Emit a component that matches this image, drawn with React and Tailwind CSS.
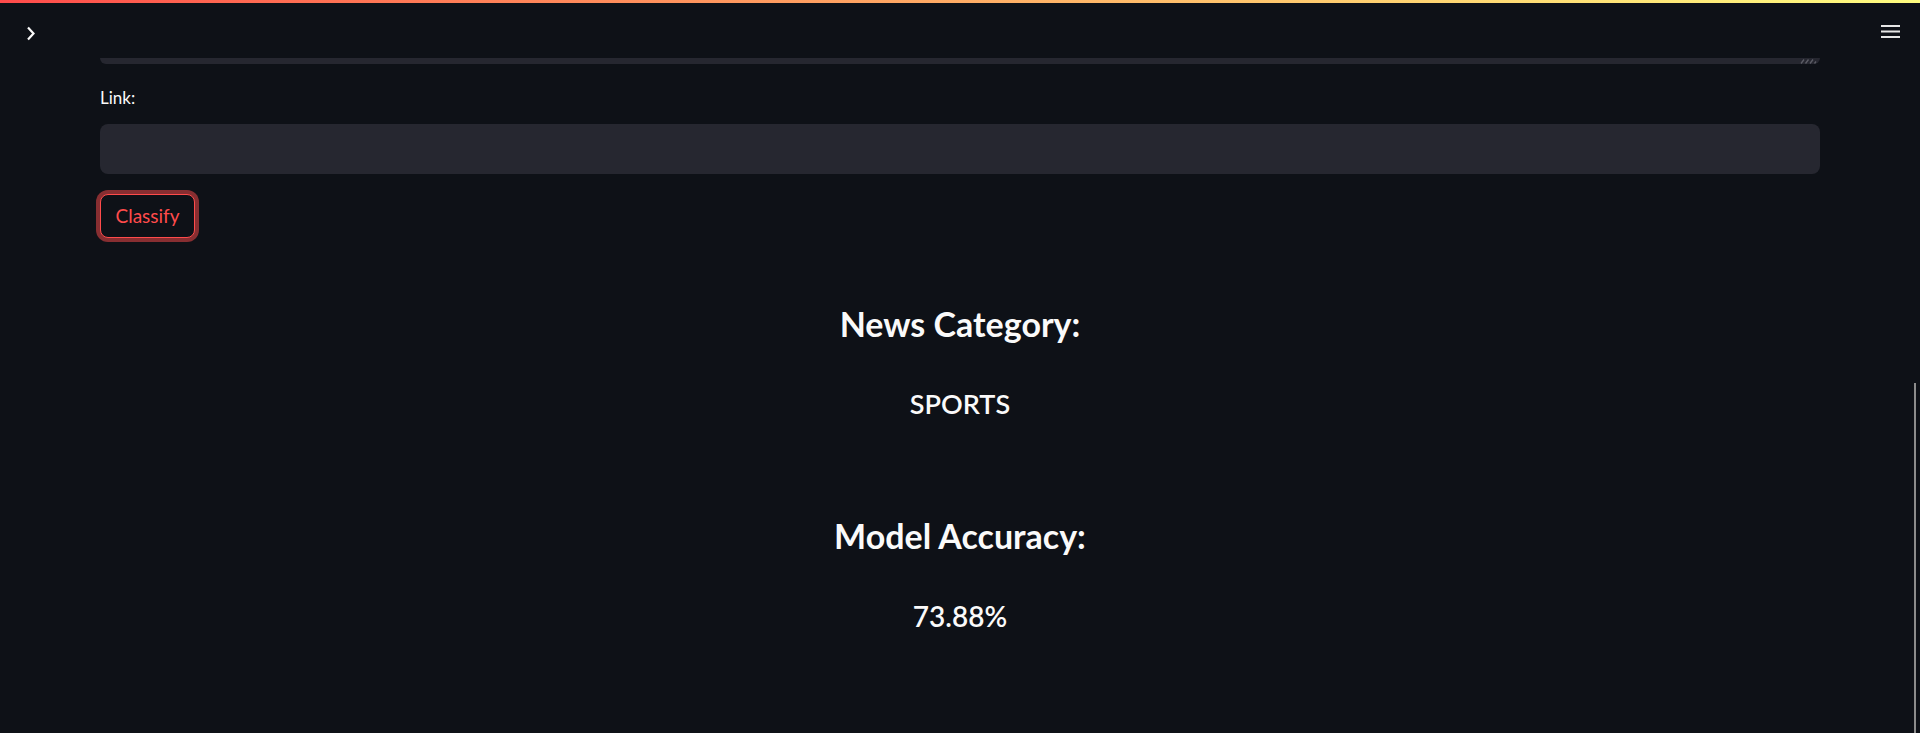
import React from "react";

const font = { fontFamily: "Lato, 'Noto Sans', sans-serif" };

function ResizeGrip() {
  return (
    <svg width="18" height="6" viewBox="0 0 18 6" className="absolute right-[2px] bottom-0">
      <path d="M1 5.5 L4 1.5 M5.5 5.5 L8.5 1.5 M10 5.5 L13 1.5 M14.5 5.5 L16 3.5" stroke="#5c5d66" strokeWidth="1.3" fill="none" />
    </svg>
  );
}

function Result({ title, value, valueSize, className }) {
  return (
    <section className={"flex flex-col items-center gap-[44px] " + className}>
      <h2 className="text-[34px] font-bold leading-[40px]">{title}</h2>
      <h3 className={valueSize + " font-semibold leading-[32px]"}>{value}</h3>
    </section>
  );
}

export default function App() {
  return (
    <div className="relative h-[733px] w-full overflow-hidden bg-[#0e1117] text-[#fafafa]" style={font}>
      {/* top decoration */}
      <div className="absolute top-0 left-0 h-[3px] w-full bg-gradient-to-r from-[#ff4b4b] to-[#fffd80]" />

      {/* fixed header: sidebar toggle + main menu */}
      <header className="absolute inset-x-0 top-[25px] flex items-start justify-between pl-[26px] pr-[20px]">
        <button className="pt-[1px]">
          <svg width="9" height="15" viewBox="0 0 9 15" fill="none">
            <polyline points="2,1.5 7.5,7.5 2,13.5" stroke="#fafafa" strokeWidth="2.2" />
          </svg>
        </button>
        <button>
          <svg width="19" height="13" viewBox="0 0 19 13">
            <rect x="0" y="0" width="19" height="2" fill="#e6e6e6" />
            <rect x="0" y="5.5" width="19" height="2" fill="#e6e6e6" />
            <rect x="0" y="11" width="19" height="2" fill="#e6e6e6" />
          </svg>
        </button>
      </header>

      {/* scrollbar thumb */}
      <div className="absolute right-[4px] top-[383px] bottom-0 w-[2px] bg-[#8c8c8c]" />

      <main className="flex flex-col px-[100px] pt-[58px]">
        {/* textarea (scrolled, only bottom visible) */}
        <div className="relative h-[6px] w-full rounded-b-lg bg-[#262730]">
          <ResizeGrip />
        </div>

        <div className="mt-[22px] flex flex-col gap-[14px]">
          <label className="text-[17px] leading-[24px]">Link:</label>
          <div className="h-[50px] w-full rounded-lg bg-[#262730]" />
        </div>

        <div className="mt-[20px] flex">
          <button className="flex h-[44px] w-[95px] items-center justify-center rounded-lg border border-[#ff4b4b] bg-[#0e1117] text-[19px] text-[#ff4b4b] ring-4 ring-[#ff4b4b]/50">
            Classify
          </button>
        </div>

        <Result title="News Category:" value="SPORTS" valueSize="text-[27px]" className="mt-[66px]" />
        <Result title="Model Accuracy:" value="73.88%" valueSize="text-[28px]" className="mt-[96px]" />
      </main>
    </div>
  );
}
